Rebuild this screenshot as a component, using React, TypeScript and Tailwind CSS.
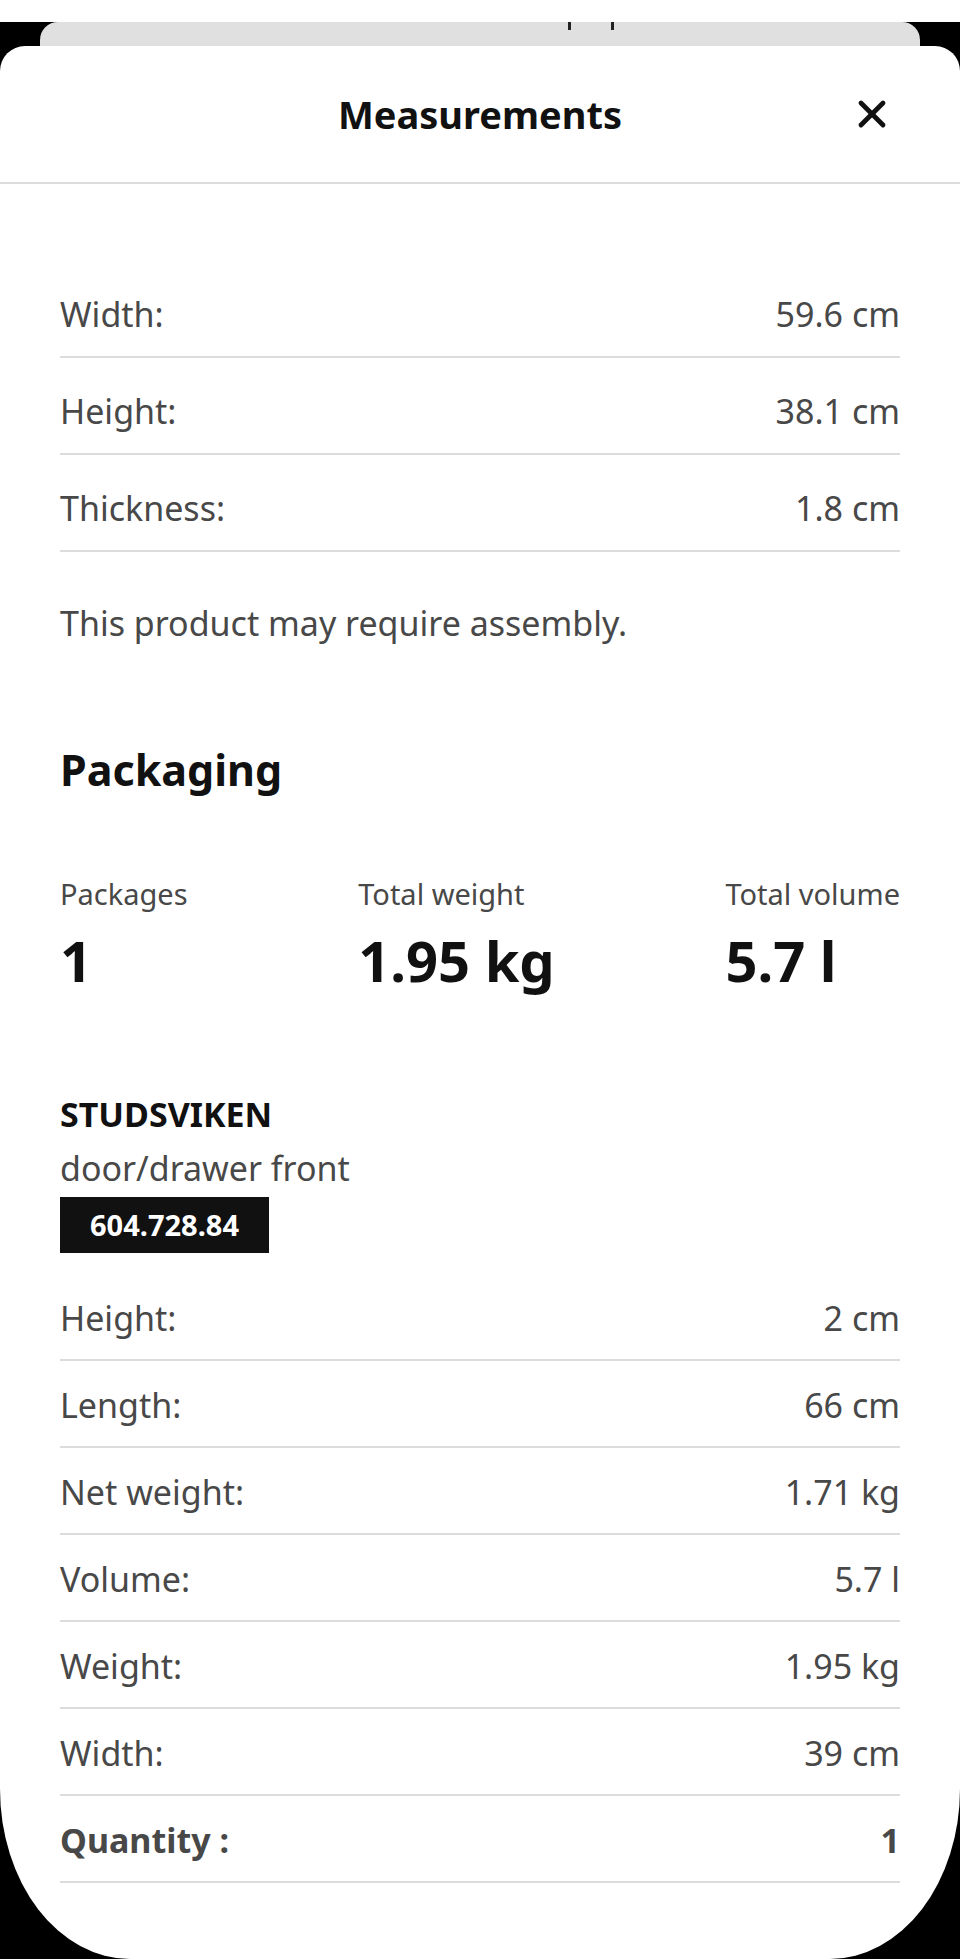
import { X } from 'lucide-react'

// Measurements sheet: product dimensions, packaging totals and per-package rows.

type Row = { label: string; value: string }

const productRows: Row[] = [
  { label: 'Width:', value: '59.6 cm' },
  { label: 'Height:', value: '38.1 cm' },
  { label: 'Thickness:', value: '1.8 cm' },
]

const packageRows: Row[] = [
  { label: 'Height:', value: '2 cm' },
  { label: 'Length:', value: '66 cm' },
  { label: 'Net weight:', value: '1.71 kg' },
  { label: 'Volume:', value: '5.7 l' },
  { label: 'Weight:', value: '1.95 kg' },
  { label: 'Width:', value: '39 cm' },
]

const totals = [
  { label: 'Packages', value: '1' },
  { label: 'Total weight', value: '1.95 kg' },
  { label: 'Total volume', value: '5.7 l' },
]

export default function App() {
  return (
    <div
      className="min-h-[1959px] bg-black"
      style={{ fontFamily: '"Noto Sans", "Open Sans", sans-serif' }}
    >
      {/* sheet peeking out from behind */}
      <div className="mx-[40px] mt-[22px] flex h-[24px] gap-[40px] overflow-hidden rounded-t-[18px] bg-[#e0e0e0] pl-[528px]">
        <span className="h-[8px] w-[3px] bg-[#222]" />
        <span className="h-[8px] w-[3px] bg-[#222]" />
      </div>

      <div className="flex min-h-[1913px] flex-col rounded-t-[25px] rounded-bl-[130px_170px] rounded-br-[130px_170px] bg-white">
        <header className="relative flex h-[138px] items-center justify-center border-b-2 border-[#dcdcdc]">
          <h1 className="text-[38px] font-bold text-[#111]">Measurements</h1>
          <button
            type="button"
            className="absolute right-[66px] top-1/2 -translate-y-1/2 text-[#111]"
          >
            <X size={44} strokeWidth={2.6} />
          </button>
        </header>

        <div className="px-[60px] pt-[77px] text-[#484848]">
          {productRows.map((r) => (
            <div
              key={r.label}
              className="flex items-center justify-between border-b-2 border-[#dcdcdc] pt-[29px] pb-[18px] text-[34px] leading-[48px]"
            >
              <span>{r.label}</span>
              <span>{r.value}</span>
            </div>
          ))}

          <p className="mt-[47px] text-[34px] leading-[48px]">
            This product may require assembly.
          </p>

          <h2 className="mt-[95px] text-[43px] font-bold leading-[56px] text-[#111]">
            Packaging
          </h2>

          <div className="mt-[76px] flex justify-between">
            {totals.map((t) => (
              <div key={t.label} className="flex flex-col">
                <span className="text-[29px] leading-[40px]">{t.label}</span>
                <span className="mt-[13px] text-[56px] font-bold leading-[66px] text-[#111]">
                  {t.value}
                </span>
              </div>
            ))}
          </div>

          <div className="mt-[99px] text-[34px] font-bold leading-[44px] text-[#111]">
            STUDSVIKEN
          </div>
          <div className="mt-[10px] text-[34px] leading-[44px]">door/drawer front</div>
          <div className="mt-[7px] inline-flex h-[56px] items-center bg-[#111] px-[30px] text-[29px] font-bold text-white">
            604.728.84
          </div>

          <div className="mt-[21px]">
            {packageRows.map((r, i) => (
              <div
                key={i}
                className="flex items-center justify-between border-b-2 border-[#dcdcdc] pt-[20px] pb-[17px] text-[34px] leading-[48px]"
              >
                <span>{r.label}</span>
                <span>{r.value}</span>
              </div>
            ))}
            <div className="flex items-center justify-between border-b-2 border-[#dcdcdc] pt-[20px] pb-[17px] text-[34px] font-bold leading-[48px]">
              <span>Quantity :</span>
              <span>1</span>
            </div>
          </div>
        </div>
      </div>
    </div>
  )
}
